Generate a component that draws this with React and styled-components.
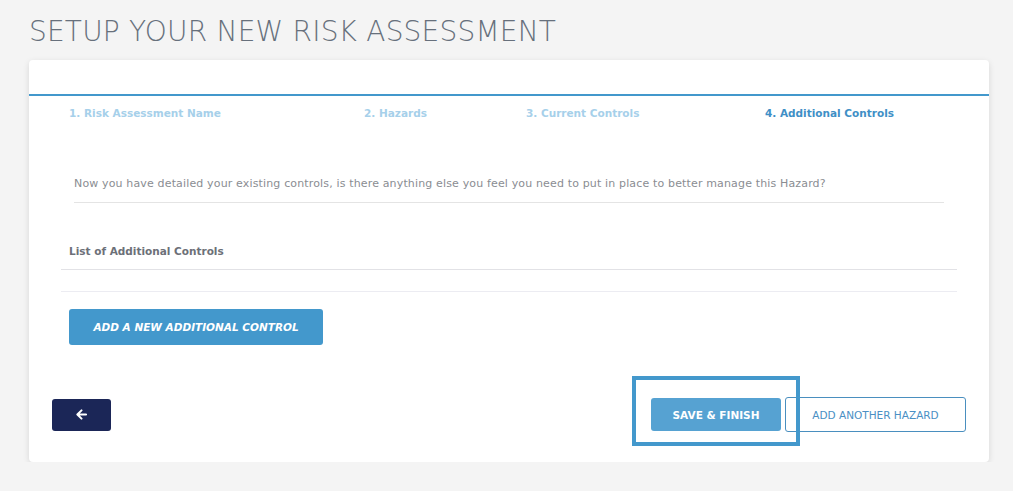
import React from "react";
import styled, { createGlobalStyle } from "styled-components";

const GlobalStyle = createGlobalStyle`
  html, body {
    margin: 0;
    padding: 0;
    background: #f4f4f4;
    font-family: "DejaVu Sans", "Open Sans", sans-serif;
  }
`;

const Page = styled.div`
  padding: 14px 24px 0 29px;
  width: 960px;
`;

const Title = styled.h1`
  margin: 0 0 10px;
  font-family: "DejaVu Sans", sans-serif;
  font-weight: 200;
  font-size: 28px;
  line-height: 36px;
  color: #67707c;
  letter-spacing: 0.2px;
`;

const Card = styled.div`
  background: #fff;
  border-radius: 4px;
  box-shadow: 0 2px 6px rgba(0, 0, 0, 0.12);
  height: 402px;
  display: flex;
  flex-direction: column;
`;

const StepsHeader = styled.div`
  padding-top: 34px;
`;

const StepsLine = styled.div`
  height: 2px;
  background: #4398cc;
`;

const Steps = styled.div`
  display: grid;
  grid-template-columns: 295px 162px 239px 1fr;
  padding: 11px 0 11px 40px;
`;

const Step = styled.div`
  font-size: 10.5px;
  font-weight: 700;
  color: ${(p) => (p.$active ? "#3f8fc6" : "#a6d0ea")};
`;

const Body = styled.div`
  display: flex;
  flex-direction: column;
  padding: 0 32px 0 32px;
`;

const Question = styled.p`
  margin: 47px 13px 0 13px;
  padding-bottom: 12px;
  border-bottom: 1px solid #e4e4e4;
  font-size: 11px;
  color: #8a8d92;
  letter-spacing: 0.15px;
`;

const ListTitle = styled.div`
  margin-top: 42px;
  padding: 0 8px 12px;
  border-bottom: 1px solid #e2e2e6;
  font-size: 10.5px;
  font-weight: 700;
  color: #6c7078;
`;

const EmptyList = styled.div`
  height: 21px;
  border-bottom: 1px solid #ececf2;
`;

const PrimaryButton = styled.button`
  align-self: flex-start;
  margin: 17px 0 0 8px;
  width: 254px;
  height: 36px;
  border: none;
  border-radius: 3px;
  background: #4398cc;
  color: #fff;
  font-family: inherit;
  font-size: 10.5px;
  font-weight: 600;
  font-style: italic;
`;

const Footer = styled.div`
  margin-top: 52px;
  display: flex;
  align-items: center;
  padding: 0 23px 0 23px;
`;

const BackButton = styled.button`
  width: 59px;
  height: 32px;
  border: none;
  border-radius: 3px;
  background: #1b2657;
  color: #fff;
  display: flex;
  align-items: center;
  justify-content: center;
`;

const Actions = styled.div`
  margin-left: auto;
  display: flex;
  align-items: center;
  gap: 4px;
`;

const Highlight = styled.span`
  position: relative;
  display: inline-flex;

  &::after {
    content: "";
    position: absolute;
    left: -19px;
    right: -19px;
    top: -22px;
    bottom: -15px;
    border: 4px solid #4398cc;
    pointer-events: none;
  }
`;

const SaveButton = styled.button`
  width: 130px;
  height: 33px;
  border: none;
  border-radius: 3px;
  background: #56a2d2;
  color: #fff;
  font-family: inherit;
  font-size: 10.5px;
  font-weight: 600;
`;

const OutlineButton = styled.button`
  width: 181px;
  height: 35px;
  border: 1px solid #4a8fbf;
  border-radius: 3px;
  background: #fff;
  color: #4a8fc4;
  font-family: inherit;
  font-size: 10.5px;
`;

const ArrowLeft = () => (
  <svg width="11" height="11" viewBox="0 0 12 12" fill="none">
    <path d="M11 6H2M6 1.5L1.5 6L6 10.5" stroke="#fff" strokeWidth="2.2" strokeLinecap="round" strokeLinejoin="round" />
  </svg>
);

export default function App() {
  return (
    <>
      <GlobalStyle />
      <Page>
        <Title>SETUP YOUR NEW RISK ASSESSMENT</Title>
        <Card>
          <StepsHeader>
            <StepsLine />
            <Steps>
              <Step>1. Risk Assessment Name</Step>
              <Step>2. Hazards</Step>
              <Step>3. Current Controls</Step>
              <Step $active>4. Additional Controls</Step>
            </Steps>
          </StepsHeader>
          <Body>
            <Question>
              Now you have detailed your existing controls, is there anything else you feel you need to put in place to better manage this Hazard?
            </Question>
            <ListTitle>List of Additional Controls</ListTitle>
            <EmptyList />
            <PrimaryButton>ADD A NEW ADDITIONAL CONTROL</PrimaryButton>
          </Body>
          <Footer>
            <BackButton>
              <ArrowLeft />
            </BackButton>
            <Actions>
              <Highlight>
                <SaveButton>SAVE &amp; FINISH</SaveButton>
              </Highlight>
              <OutlineButton>ADD ANOTHER HAZARD</OutlineButton>
            </Actions>
          </Footer>
        </Card>
      </Page>
    </>
  );
}
